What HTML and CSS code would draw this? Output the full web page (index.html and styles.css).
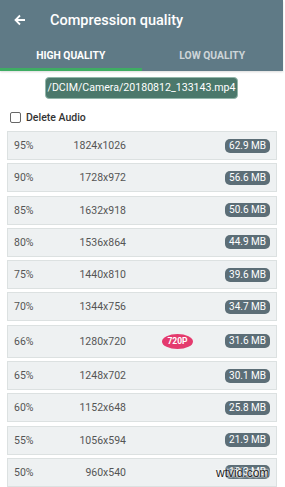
FILE: index.html
```html
<!DOCTYPE html>
<html>
<head>
<meta charset="utf-8">
<link rel="stylesheet" href="styles.css">
</head>
<body>
<div class="page">
  <header class="appbar">
    <div class="toolbar">
      <svg class="back" width="12" height="12" viewBox="0 0 12 12"><path d="M11 6H2M6 1.5L1.5 6L6 10.5" fill="none" stroke="#fff" stroke-width="1.8"/></svg>
      <span class="title">Compression quality</span>
    </div>
    <div class="tabs">
      <div class="tab active">HIGH QUALITY</div>
      <div class="tab">LOW QUALITY</div>
    </div>
  </header>
  <div class="pathwrap"><span class="path">/DCIM/Camera/20180812_133143.mp4</span></div>
  <label class="check"><span class="box"></span><span class="checklabel">Delete Audio</span></label>
  <div class="list">
    <div class="row"><span class="pct">95%</span><span class="res">1824x1026</span><span class="size">62.9 MB</span></div>
    <div class="row"><span class="pct">90%</span><span class="res">1728x972</span><span class="size">56.6 MB</span></div>
    <div class="row"><span class="pct">85%</span><span class="res">1632x918</span><span class="size">50.6 MB</span></div>
    <div class="row"><span class="pct">80%</span><span class="res">1536x864</span><span class="size">44.9 MB</span></div>
    <div class="row"><span class="pct">75%</span><span class="res">1440x810</span><span class="size">39.6 MB</span></div>
    <div class="row"><span class="pct">70%</span><span class="res">1344x756</span><span class="size">34.7 MB</span></div>
    <div class="row tall"><span class="pct">66%</span><span class="res">1280x720</span><span class="tag">720P</span><span class="size">31.6 MB</span></div>
    <div class="row"><span class="pct">65%</span><span class="res">1248x702</span><span class="size">30.1 MB</span></div>
    <div class="row"><span class="pct">60%</span><span class="res">1152x648</span><span class="size">25.8 MB</span></div>
    <div class="row"><span class="pct">55%</span><span class="res">1056x594</span><span class="size">21.9 MB</span></div>
    <div class="row"><span class="pct">50%</span><span class="res">960x540</span><span class="size">18.3 MB</span></div>
  </div>
  <div class="watermark">wtvid.com</div>
</div>
</body>
</html>
```

FILE: styles.css
```css
html, body {
  margin: 0;
  padding: 0;
  background: #fff;
}
body {
  font-family: Roboto, "Noto Sans", sans-serif;
  width: 285px;
  height: 487px;
  overflow: hidden;
}
.page {
  position: relative;
  height: 487px;
}
.appbar {
  width: 283px;
  background: #5f7a86;
  box-shadow: 0 1px 2px rgba(0,0,0,0.15);
}
.toolbar {
  height: 40px;
  display: flex;
  align-items: center;
  padding-left: 14px;
}
.back {
  display: block;
}
.title {
  margin-left: 24px;
  color: #fff;
  font-size: 14.5px;
  font-weight: 500;
}
.tabs {
  display: flex;
  height: 31px;
}
.tab {
  flex: 1;
  display: flex;
  align-items: center;
  justify-content: center;
  font-size: 10.3px;
  font-weight: 700;
  color: rgba(255,255,255,0.7);
  border-bottom: 3px solid transparent;
  padding-top: 3px;
}
.tab.active {
  color: #fff;
  border-bottom-color: #3eac63;
}
.pathwrap {
  width: 283px;
  display: flex;
  justify-content: center;
  margin-top: 6px;
}
.path {
  background: #4b786b;
  border: 1px solid #93b6aa;
  border-radius: 4px;
  color: #fff;
  font-size: 10.6px;
  height: 20px;
  line-height: 20px;
  padding: 0 2px;
  white-space: nowrap;
}
.check {
  display: flex;
  align-items: center;
  height: 12px;
  margin: 12px 0 0 10px;
}
.box {
  width: 9px;
  height: 9px;
  border: 1.6px solid #666;
  border-radius: 2px;
}
.checklabel {
  margin-left: 5px;
  font-size: 10.5px;
  font-weight: 500;
  color: #333;
}
.list {
  margin: 8px 8px 0 7px;
  display: flex;
  flex-direction: column;
  gap: 3.3px;
}
.row {
  height: 27px;
  border: 1px solid #dce1e1;
  background: #eef1f2;
  display: flex;
  align-items: center;
  font-size: 10.5px;
  color: #555;
}
.row.tall {
  height: 31px;
}
.pct {
  width: 52px;
  padding-left: 6px;
  box-sizing: border-box;
}
.res {
  width: 66px;
  text-align: right;
}
.tag {
  margin-left: 36px;
  background: #e43a6e;
  color: #fff;
  font-size: 8.5px;
  font-weight: 700;
  width: 31px;
  height: 15px;
  line-height: 15px;
  border-radius: 50%;
  text-align: center;
}
.size {
  margin-left: auto;
  margin-right: 6px;
  background: #5c6e77;
  color: #fff;
  font-size: 10px;
  height: 14px;
  line-height: 14px;
  padding: 0 4px;
  border-radius: 5px;
}
.watermark {
  position: absolute;
  left: 216px;
  top: 466px;
  font-family: Arial, "Liberation Sans", sans-serif;
  font-size: 12px;
  color: #222;
  text-shadow: 0 0 2px #fff, 0 0 2px #fff, 0 0 3px #fff;
}
```
